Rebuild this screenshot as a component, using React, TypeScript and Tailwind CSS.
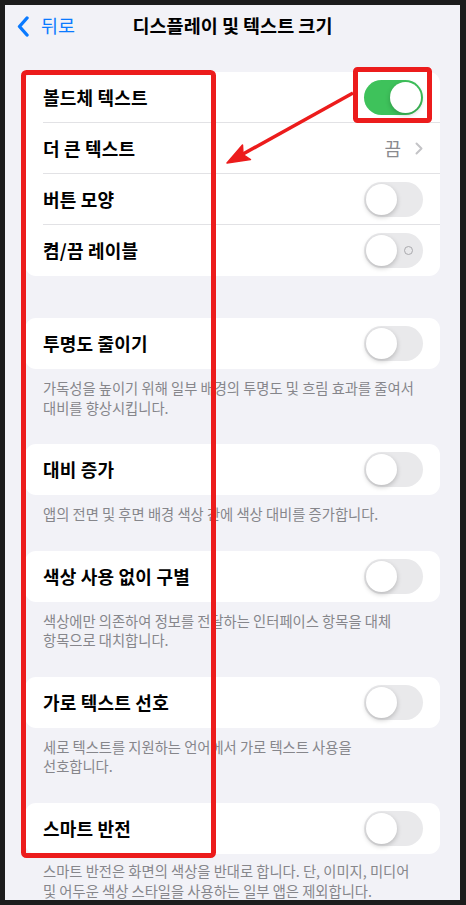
import React from "react"

function Toggle({ on = false, labels = false }: { on?: boolean; labels?: boolean }) {
  return (
    <div
      className={`relative flex w-[59px] h-[35px] rounded-full p-[2px] shrink-0 ${
        on ? "bg-[#3ec25b] justify-end" : "bg-[#e9e9eb] justify-start"
      }`}
    >
      {labels && !on && (
        <span className="absolute right-[10px] top-[13px] w-[9px] h-[9px] rounded-full border-[1.5px] border-[#a9a9ad]" />
      )}
      <div className="w-[31px] h-[31px] rounded-full bg-white shadow-[0_2px_5px_rgba(0,0,0,0.22)]" />
    </div>
  )
}

function Row({ label, last = false, children }: { label: string; last?: boolean; children: React.ReactNode }) {
  return (
    <div className="h-[51px] pl-[18px] flex">
      <div
        className={`flex-1 flex items-center justify-between pr-[17px] ${
          last ? "" : "border-b border-[#e2e2e5]"
        }`}
      >
        <span className="text-[18px] font-semibold text-black tracking-[0.2px]">{label}</span>
        {children}
      </div>
    </div>
  )
}

function Group({ label, desc, tight = false }: { label: string; desc: React.ReactNode; tight?: boolean }) {
  return (
    <section className={tight ? "" : "mb-[27px]"}>
      <div className="bg-white rounded-[11px]">
        <Row label={label} last>
          <Toggle />
        </Row>
      </div>
      <p
        className={`px-[18px] text-[14.3px] leading-[19.5px] text-[#86868b] whitespace-nowrap ${
          tight ? "pt-[7.5px]" : "pt-[9px]"
        }`}
      >
        {desc}
      </p>
    </section>
  )
}

export default function App() {
  return (
    <div className="relative w-[466px] h-[905px] bg-[#1c1c1c] pt-[5px] pb-[5px] pl-[5px] pr-[6px] font-['Noto_Sans_CJK_KR','Noto_Sans',sans-serif]">
      <div className="h-full bg-[#f2f2f7] overflow-hidden">
        {/* Nav */}
        <header className="h-[42px] grid grid-cols-[1fr_auto_1fr] items-center">
          <div className="flex items-center gap-[12px] pl-[12px] text-[#0a7aff]">
            <svg width="12" height="21" viewBox="0 0 12 21" fill="none">
              <path d="M10 2L2.5 10.5L10 19" stroke="#0a7aff" strokeWidth="3.4" strokeLinecap="round" strokeLinejoin="round" />
            </svg>
            <span className="text-[18.5px]">뒤로</span>
          </div>
          <h1 className="text-[18.5px] font-semibold text-black">디스플레이 및 텍스트 크기</h1>
          <div />
        </header>

        <main className="px-5 pt-[25px]">
          <div className="bg-white rounded-[11px] mb-[42px]">
            <Row label="볼드체 텍스트">
              <Toggle on />
            </Row>
            <Row label="더 큰 텍스트">
              <div className="flex items-center gap-[14px]">
                <span className="text-[18px] text-[#8a8a8e]">끔</span>
                <svg width="8" height="13" viewBox="0 0 8 13" fill="none">
                  <path d="M1.5 1.5L6.5 6.5L1.5 11.5" stroke="#c4c4c7" strokeWidth="2" strokeLinecap="round" strokeLinejoin="round" />
                </svg>
              </div>
            </Row>
            <Row label="버튼 모양">
              <Toggle />
            </Row>
            <Row label="켬/끔 레이블" last>
              <Toggle labels />
            </Row>
          </div>

          <Group
            label="투명도 줄이기"
            desc={
              <>
                가독성을 높이기 위해 일부 배경의 투명도 및 흐림 효과를 줄여서
                <br />
                대비를 향상시킵니다.
              </>
            }
          />
          <Group label="대비 증가" desc="앱의 전면 및 후면 배경 색상 간에 색상 대비를 증가합니다." />
          <Group
            label="색상 사용 없이 구별"
            desc={
              <>
                색상에만 의존하여 정보를 전달하는 인터페이스 항목을 대체
                <br />
                항목으로 대치합니다.
              </>
            }
          />
          <Group
            label="가로 텍스트 선호"
            desc={
              <>
                세로 텍스트를 지원하는 언어에서 가로 텍스트 사용을
                <br />
                선호합니다.
              </>
            }
          />
          <Group
            label="스마트 반전"
            tight
            desc={
              <>
                스마트 반전은 화면의 색상을 반대로 합니다. 단, 이미지, 미디어
                <br />
                및 어두운 색상 스타일을 사용하는 일부 앱은 제외합니다.
              </>
            }
          />
        </main>
      </div>

      {/* Red annotations */}
      <svg className="absolute inset-0 pointer-events-none" width="466" height="905" viewBox="0 0 466 905" fill="none">
        <rect x="23.5" y="72.5" width="190" height="783" rx="3" stroke="#ec1c1c" strokeWidth="5" />
        <rect x="355.5" y="69.5" width="74" height="51" rx="2" stroke="#ec1c1c" strokeWidth="5" />
        <line x1="353" y1="93" x2="243" y2="154" stroke="#ec1c1c" strokeWidth="3.5" />
        <path d="M227 163L250.5 159.5L243 154.5L242.5 145Z" fill="#ec1c1c" stroke="#ec1c1c" strokeWidth="1.5" strokeLinejoin="round" />
      </svg>
    </div>
  )
}
